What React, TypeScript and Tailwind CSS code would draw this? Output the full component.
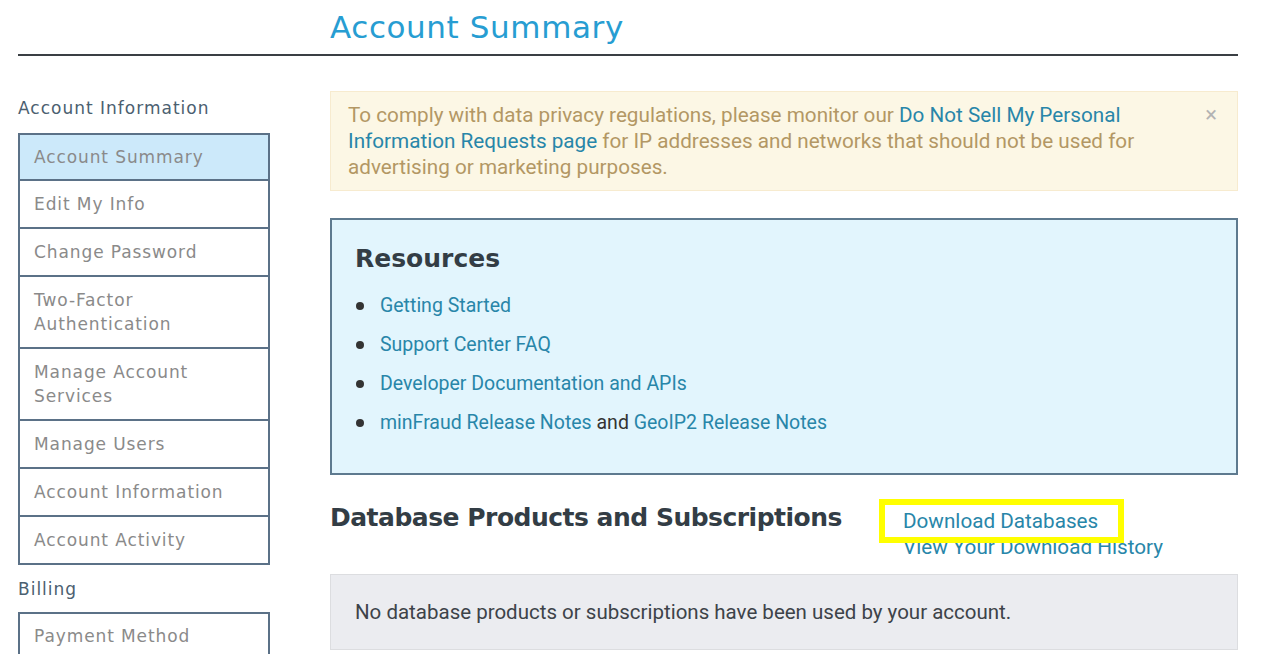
import React from "react";

const mont = "font-['DejaVu_Sans',sans-serif]";
const roboto = "font-['Roboto',sans-serif]";

const accountLinks = [
  { label: "Account Summary", active: true },
  { label: "Edit My Info" },
  { label: "Change Password" },
  { label: "Two-Factor Authentication", wrap: true },
  { label: "Manage Account Services", wrap: true },
  { label: "Manage Users" },
  { label: "Account Information" },
  { label: "Account Activity" },
];

const SideItem = ({
  label,
  active,
  first,
  wrap,
}: {
  label: string;
  active?: boolean;
  first?: boolean;
  wrap?: boolean;
}) => (
  <a
    href="#"
    className={`block border-x-2 border-b-2 border-[#5b7187] pl-[14px] text-[17px] leading-[24px] tracking-[0.9px] text-[#8a8a8a] ${
      first ? "border-t-2 pt-[10px] pb-[10px]" : "pt-[11px] pb-[11px]"
    } ${active ? "bg-[#cce9fa]" : "bg-white"} ${wrap ? "pr-[70px]" : "pr-[10px]"}`}
  >
    {label}
  </a>
);

const Sidebar = () => (
  <aside className={`w-[252px] shrink-0 ${mont}`}>
    <h3 className="mt-[40px] text-[17px] leading-[24px] tracking-[1px] text-[#4b6070]">
      Account Information
    </h3>
    <nav className="mt-[13px]">
      {accountLinks.map((l, i) => (
        <SideItem
          key={l.label}
          label={l.label}
          active={l.active}
          first={i === 0}
          wrap={l.wrap}
        />
      ))}
    </nav>
    <h3 className="mt-[12px] text-[17px] leading-[24px] tracking-[1px] text-[#4b6070]">
      Billing
    </h3>
    <nav className="mt-[11px]">
      <SideItem label="Payment Method" first />
    </nav>
  </aside>
);

const Link = ({ children }: { children: React.ReactNode }) => (
  <a href="#" className="text-[#2886a9]">
    {children}
  </a>
);

export default function App() {
  return (
    <div className="min-h-screen bg-white text-[#333] pl-[18px] pr-[42px]">
      <header className="border-b-2 border-[#3a3f44] h-[56px] pl-[312px] pt-[7px]">
        <h1 className={`${mont} text-[31px] leading-[40px] tracking-[0.6px] text-[#279dd2]`}>
          Account Summary
        </h1>
      </header>

      <div className="flex gap-[60px]">
        <Sidebar />

        <main className={`flex-1 pt-[35px] ${roboto}`}>
          <div className="relative border border-[#f7ebcf] bg-[#fcf7e5] pl-[17px] pr-[80px] py-[10px] text-[20.7px] leading-[26px] text-[#b39764]">
            To comply with data privacy regulations, please monitor our{" "}
            <Link>Do Not Sell My Personal Information Requests page</Link> for
            IP addresses and networks that should not be used for advertising
            or marketing purposes.
            <button className="absolute right-[20px] top-[10px] text-[22px] leading-[26px] text-[#b3b3b3]">
              ×
            </button>
          </div>

          <section className="mt-[27px] border-2 border-[#5e7a8f] bg-[#e2f5fd] px-[23px] pt-[23px] pb-[37px]">
            <h2 className={`${mont} text-[25px] leading-[32px] font-bold text-[#333d45]`}>
              Resources
            </h2>
            <ul className="mt-[18px] text-[19.5px] leading-[26px]">
              {[
                <Link>Getting Started</Link>,
                <Link>Support Center FAQ</Link>,
                <Link>Developer Documentation and APIs</Link>,
                <>
                  <Link>minFraud Release Notes</Link>{" "}
                  <span className="text-[#333]">and</span>{" "}
                  <Link>GeoIP2 Release Notes</Link>
                </>,
              ].map((item, i) => (
                <li key={i} className="flex items-center mb-[13px] last:mb-0">
                  <span className="w-[8px] h-[8px] rounded-full bg-[#333] ml-[1px] mr-[16px]" />
                  <span>{item}</span>
                </li>
              ))}
            </ul>
          </section>

          <div className="mt-[26px] grid grid-cols-[573px_1fr]">
            <h2 className={`${mont} text-[25px] leading-[34px] font-bold tracking-[-0.5px] text-[#333d45]`}>
              Database Products and Subscriptions
            </h2>
            <div className="pt-[7px] text-[20.7px] leading-[26px] flex flex-col items-start">
              <span className="relative">
                <Link>Download Databases</Link>
                <span className="absolute -left-[24px] -right-[26px] -top-[9px] -bottom-[9px] border-[6px] border-[#ffff00] pointer-events-none" />
              </span>
              <Link>View Your Download History</Link>
            </div>
          </div>

          <div className="mt-[14px] border border-[#dcdde0] bg-[#ebecf0] px-[24px] py-[24px] text-[20.5px] leading-[26px] text-[#3d4349]">
            No database products or subscriptions have been used by your account.
          </div>
        </main>
      </div>
    </div>
  );
}
